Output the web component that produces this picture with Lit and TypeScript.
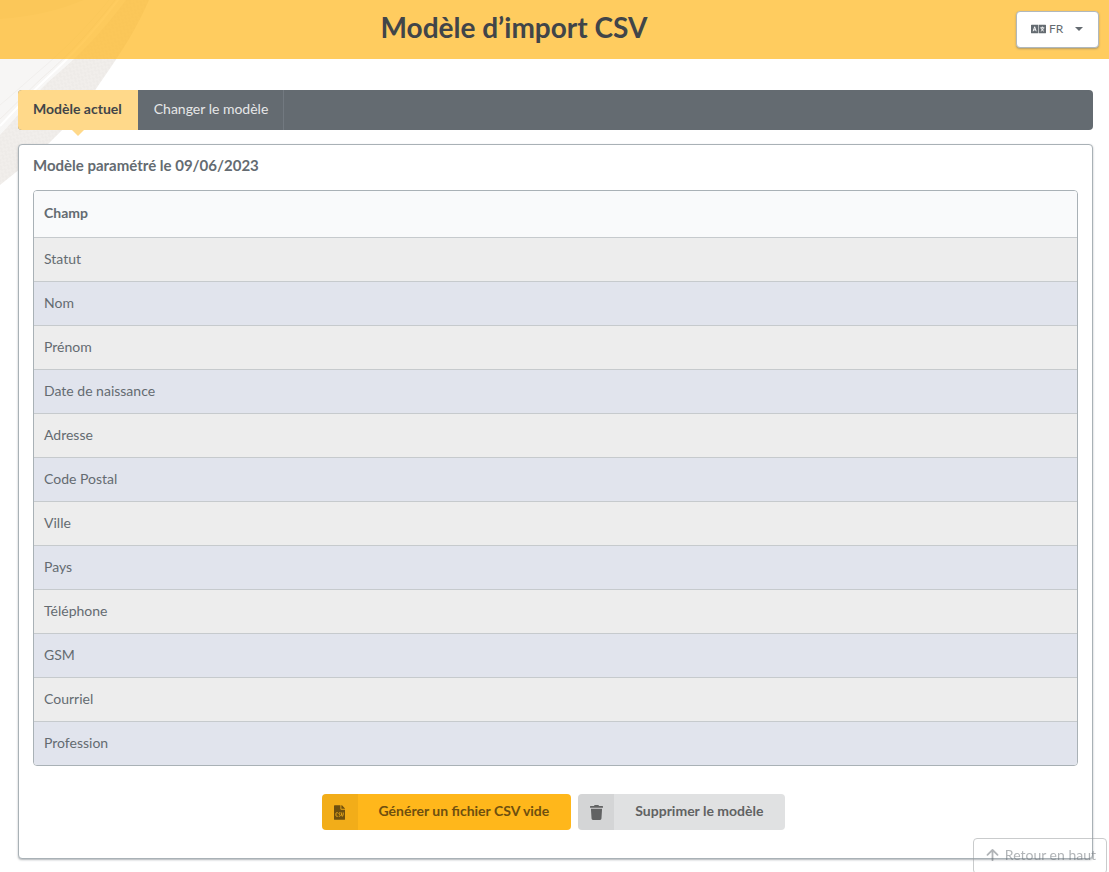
import { LitElement, html, css, svg } from "lit";
import { customElement, state } from "lit/decorators.js";
import { classMap } from "lit/directives/class-map.js";

const FIELDS = [
  "Statut",
  "Nom",
  "Prénom",
  "Date de naissance",
  "Adresse",
  "Code Postal",
  "Ville",
  "Pays",
  "Téléphone",
  "GSM",
  "Courriel",
  "Profession",
];

const TABS = ["Modèle actuel", "Changer le modèle"];

const languageIcon = html`<svg class="icon-lang" viewBox="0 0 640 512" aria-hidden="true">
  <path fill="currentColor" d="M24 76h288v360H24c-13 0-24-11-24-24V100c0-13 11-24 24-24zM616 76H336v360h280c13 0 24-11 24-24V100c0-13-11-24-24-24z" />
  <path fill="none" stroke="#fff" stroke-width="40" d="M92 352l64-192 64 192M112 292h88M396 206h172M482 152v54M440 226c12 50 52 96 106 120M526 226c-12 50-52 96-106 120" />
</svg>`;

const csvIcon = html`<svg class="icon-file" viewBox="0 0 384 512" aria-hidden="true">
  <path fill="currentColor" d="M224 136V0H24C11 0 0 11 0 24v464c0 13 11 24 24 24h336c13 0 24-11 24-24V160H248c-13 0-24-11-24-24zM384 122v6H256V0h6c6 0 12 3 17 7l98 98c4 5 7 11 7 17z" />
  <path class="csv-mark" fill="none" stroke-width="32" d="M132 264H96q-28 0-28 28v68q0 28 28 28h36M224 264h-28q-26 0-26 28 0 22 24 32 26 10 26 34 0 30-26 30h-28M258 256v50q4 50 32 84 28-34 32-84v-50" />
</svg>`;

const trashIcon = html`<svg class="icon-trash" viewBox="0 0 448 512" aria-hidden="true">
  <path fill="currentColor" d="M432 32H312l-9-19A24 24 0 0 0 281 0H167a24 24 0 0 0-22 13l-9 19H16A16 16 0 0 0 0 48v32a16 16 0 0 0 16 16h416a16 16 0 0 0 16-16V48a16 16 0 0 0-16-16zM32 128l21 339a48 48 0 0 0 48 45h246a48 48 0 0 0 48-45l21-339z" />
</svg>`;

const arrowUpIcon = html`<svg class="icon-up" viewBox="0 0 448 512" aria-hidden="true">
  <path fill="none" stroke="currentColor" stroke-width="66" stroke-linecap="round" stroke-linejoin="round" d="M40 252L224 68l184 184M224 76v368" />
</svg>`;

const backdrop = svg`
  <defs>
    <linearGradient id="plate" x1="0" y1="0" x2="1" y2="1">
      <stop offset="0" stop-color="#f7f6f5" />
      <stop offset="0.45" stop-color="#f7f6f5" />
      <stop offset="0.75" stop-color="#fbfbfb" />
    </linearGradient>
    <pattern id="weave" width="5" height="5" patternUnits="userSpaceOnUse" patternTransform="rotate(35)">
      <rect width="5" height="5" fill="#f1eeeb" />
      <path d="M0 1h3M2 3h3" stroke="#ece8e5" />
    </pattern>
  </defs>
  <path fill="url(#weave)" d="M0 0H149C138 26 122 52 100 83C80 114 50 146 0 185Z" />
  <path fill="url(#plate)" d="M0 0H126C102 32 78 57 48 82C30 100 14 120 0 135Z" />
  <path fill="none" stroke="#f0edea" stroke-width="1" d="M115 0C92 29 70 54 42 78C27 92 12 108 0 119" />
  <path fill="none" stroke="#ffffff" stroke-width="2" d="M118 0C96 29 73 55 45 80C29 95 13 112 0 126" />
  <path fill="none" stroke="#f1efed" stroke-width="1" d="M109 0C88 26 64 50 38 72C24 84 11 96 0 105" />
  <path fill="#f1eeea" d="M0 0H84C60 10 32 17 0 19Z" />
`;

@customElement("app-root")
export class AppRoot extends LitElement {
  @state() private activeTab = 0;

  static styles = css`
    :host {
      display: block;
      position: relative;
      min-height: 100vh;
      overflow: hidden;
      background: #fff;
      color: #646b71;
      font: 14px/20px Lato, "Liberation Sans", sans-serif;
      box-sizing: border-box;
    }
    * {
      box-sizing: border-box;
    }
    button {
      font: inherit;
      cursor: pointer;
    }
    .backdrop {
      position: absolute;
      top: 0;
      left: 0;
      width: 160px;
      height: 190px;
    }
    header {
      position: relative;
      display: flex;
      align-items: center;
      height: 59px;
      padding: 0 10px 0 12px;
      background: rgba(255, 183, 27, 0.7);
    }
    h1 {
      flex: 1;
      margin: 0;
      padding-bottom: 6px;
      text-align: center;
      font-size: 28px;
      line-height: 36px;
      font-weight: 700;
      color: #414549;
    }
    .lang {
      display: flex;
      align-items: center;
      width: 83px;
      height: 37px;
      padding: 0 15px 2px 14px;
      border: 1px solid #b0b8bd;
      border-radius: 4px;
      background: #fff;
      box-shadow: 0 1px 2px rgba(100, 107, 113, 0.5);
      color: #646b71;
      font-size: 12px;
    }
    .icon-lang {
      width: 15px;
      height: 12px;
      margin-right: 3px;
    }
    .caret {
      margin-left: auto;
      border: 4px solid transparent;
      border-top-color: currentColor;
      border-bottom: 0;
    }
    main {
      position: relative;
      padding: 31px 16px 13px 18px;
    }
    .tabs {
      display: flex;
      height: 40px;
      border-radius: 4px;
      background: #646b71;
    }
    .tab {
      position: relative;
      padding: 0 15px 2px;
      border: 0;
      border-right: 1px solid #727980;
      background: none;
      color: #e6e7e8;
    }
    .tab + .tab {
      padding-left: 16px;
    }
    .tab.active {
      border-color: #ffd98a;
      border-radius: 4px 0 0 4px;
      background: #ffd98a;
      color: #414549;
      font-weight: 700;
    }
    .tab.active::after {
      content: "";
      position: absolute;
      top: 100%;
      left: 50%;
      margin-left: -5px;
      border: 6px solid transparent;
      border-top-color: #ffd98a;
      border-bottom: 0;
    }
    .card {
      margin-top: 14px;
      padding: 10px 14px 28px;
      border: 1px solid #a9b1b6;
      border-radius: 4px;
      background: #fff;
      box-shadow: 0 1px 2px rgba(100, 107, 113, 0.5);
    }
    h2 {
      margin: 0 0 15px;
      font-size: 15px;
      line-height: 20px;
      font-weight: 700;
    }
    table {
      width: 100%;
      border: 1px solid #a9b1b6;
      border-radius: 4px;
      border-spacing: 0;
      overflow: hidden;
    }
    th,
    td {
      height: 44px;
      padding: 0 10px 2px;
      text-align: left;
      vertical-align: middle;
      border-top: 1px solid #c6cacd;
      background: #ededed;
    }
    th {
      height: 46px;
      border: 0;
      background: #f9fafb;
      font-weight: 700;
    }
    tr:nth-child(even) td {
      background: #e1e4ed;
    }
    .actions {
      display: flex;
      flex-wrap: wrap;
      justify-content: center;
      gap: 7px;
      margin-top: 28px;
      padding-right: 4px;
    }
    .action {
      display: flex;
      align-items: stretch;
      height: 36px;
      padding: 0;
      border: 0;
      border-radius: 4px;
      overflow: hidden;
      font-weight: 700;
    }
    .action .mark {
      display: grid;
      place-items: center;
      width: 36px;
      background: rgba(0, 0, 0, 0.05);
    }
    .action .label {
      padding: 7px 22px 7px 21px;
    }
    .primary {
      background: #ffb71b;
      color: #6e4f0f;
    }
    .secondary {
      background: #e0e1e2;
      color: #616263;
    }
    .icon-file {
      width: 11px;
      height: 15px;
    }
    .csv-mark {
      stroke: #f2ae1a;
    }
    .icon-trash {
      width: 13px;
      height: 15px;
    }
    .top {
      position: fixed;
      right: 2px;
      bottom: -2px;
      display: flex;
      align-items: center;
      height: 36px;
      padding: 0 10px 2px 12px;
      border: 1px solid #939799;
      border-radius: 4px;
      background: none;
      color: #646b71;
      opacity: 0.5;
      text-decoration: none;
    }
    .icon-up {
      width: 13px;
      height: 14px;
      margin-right: 6px;
    }
  `;

  render() {
    return html`
      <svg class="backdrop" viewBox="0 0 160 190" aria-hidden="true">${backdrop}</svg>
      <header>
        <h1>Modèle d’import CSV</h1>
        <button class="lang" aria-haspopup="listbox">
          ${languageIcon}<span>FR</span><span class="caret"></span>
        </button>
      </header>
      <main>
        <nav class="tabs">
          ${TABS.map(
            (label, i) => html`<button
              class=${classMap({ tab: true, active: this.activeTab === i })}
              @click=${() => (this.activeTab = i)}
            >${label}</button>`
          )}
        </nav>
        <section class="card">
          <h2>Modèle paramétré le 09/06/2023</h2>
          <table>
            <thead>
              <tr><th scope="col">Champ</th></tr>
            </thead>
            <tbody>
              ${FIELDS.map((field) => html`<tr><td>${field}</td></tr>`)}
            </tbody>
          </table>
          <div class="actions">
            <button class="action primary">
              <span class="mark">${csvIcon}</span><span class="label">Générer un fichier CSV vide</span>
            </button>
            <button class="action secondary">
              <span class="mark">${trashIcon}</span><span class="label">Supprimer le modèle</span>
            </button>
          </div>
        </section>
      </main>
      <a class="top" href="#">${arrowUpIcon}<span>Retour en haut</span></a>
    `;
  }
}
